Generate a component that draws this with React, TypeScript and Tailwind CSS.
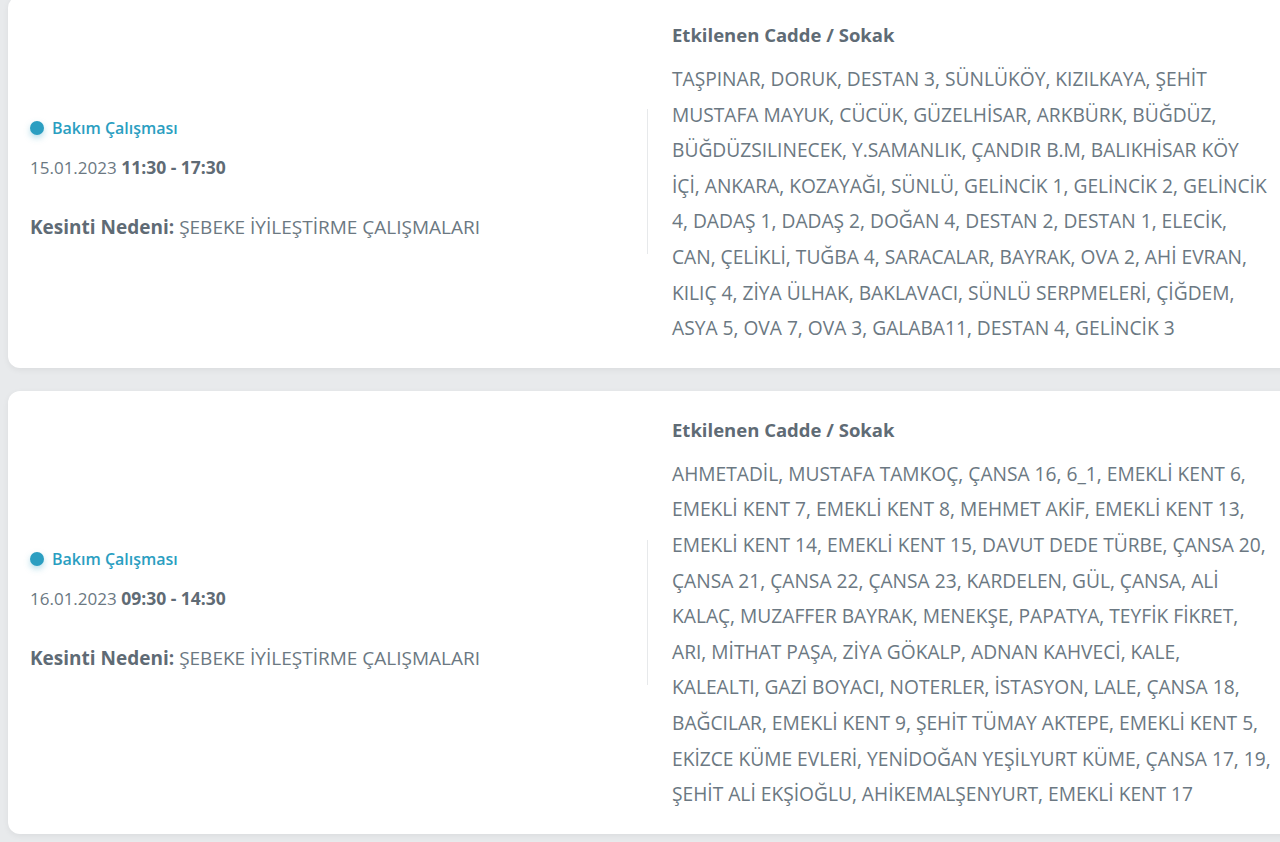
import React from 'react';

type Outage = {
    date: string;
    time: string;
    reason: string;
    streets: string;
    narrow?: boolean;
};

const outages: Outage[] = [
    {
        date: '15.01.2023',
        time: '11:30 - 17:30',
        reason: 'ŞEBEKE İYİLEŞTİRME ÇALIŞMALARI',
        narrow: true,
        streets:
            'TAŞPINAR, DORUK, DESTAN 3, SÜNLÜKÖY, KIZILKAYA, ŞEHİT MUSTAFA MAYUK, CÜCÜK, GÜZELHİSAR, ARKBÜRK, BÜĞDÜZ, BÜĞDÜZSILINECEK, Y.SAMANLIK, ÇANDIR B.M, BALIKHİSAR KÖY İÇİ, ANKARA, KOZAYAĞI, SÜNLÜ, GELİNCİK 1, GELİNCİK 2, GELİNCİK 4, DADAŞ 1, DADAŞ 2, DOĞAN 4, DESTAN 2, DESTAN 1, ELECİK, CAN, ÇELİKLİ, TUĞBA 4, SARACALAR, BAYRAK, OVA 2, AHİ EVRAN, KILIÇ 4, ZİYA ÜLHAK, BAKLAVACI, SÜNLÜ SERPMELERİ, ÇİĞDEM, ASYA 5, OVA 7, OVA 3, GALABA11, DESTAN 4, GELİNCİK 3',
    },
    {
        date: '16.01.2023',
        time: '09:30 - 14:30',
        reason: 'ŞEBEKE İYİLEŞTİRME ÇALIŞMALARI',
        streets:
            'AHMETADİL, MUSTAFA TAMKOÇ, ÇANSA 16, 6_1, EMEKLİ KENT 6, EMEKLİ KENT 7, EMEKLİ KENT 8, MEHMET AKİF, EMEKLİ KENT 13, EMEKLİ KENT 14, EMEKLİ KENT 15, DAVUT DEDE TÜRBE, ÇANSA 20, ÇANSA 21, ÇANSA 22, ÇANSA 23, KARDELEN, GÜL, ÇANSA, ALİ KALAÇ, MUZAFFER BAYRAK, MENEKŞE, PAPATYA, TEYFİK FİKRET, ARI, MİTHAT PAŞA, ZİYA GÖKALP, ADNAN KAHVECİ, KALE, KALEALTI, GAZİ BOYACI, NOTERLER, İSTASYON, LALE, ÇANSA 18, BAĞCILAR, EMEKLİ KENT 9, ŞEHİT TÜMAY AKTEPE, EMEKLİ KENT 5, EKİZCE KÜME EVLERİ, YENİDOĞAN YEŞİLYURT KÜME, ÇANSA 17, 19, ŞEHİT ALİ EKŞİOĞLU, AHİKEMALŞENYURT, EMEKLİ KENT 17',
    },
];

const OutageCard: React.FC<{ item: Outage }> = ({ item }) => {
    return (
        <div className="flex w-[1300px] rounded-[12px] bg-white shadow-[0_2px_6px_rgba(0,0,0,0.06)]">
            {/* left: type, date and reason */}
            <div className="flex w-[640px] shrink-0 items-center">
                <div className="flex flex-1 flex-col pb-[6px] pl-[22px]">
                    <div className="flex h-[22px] items-center gap-[8px]">
                        <span className="h-[14px] w-[14px] rounded-full bg-[#2a9ec1] shadow-[0_3px_6px_rgba(42,158,193,0.35)]" />
                        <span className="text-[16px] font-semibold text-[#2a9ec1]">Bakım Çalışması</span>
                    </div>
                    <div className="mt-[15px] text-[17px] leading-[26px] text-[#6b7882]">
                        {item.date} <span className="text-[17.5px] font-bold text-[#5f6b75]">{item.time}</span>
                    </div>
                    <div className="mt-[33px] text-[19px] leading-[26px] text-[#6b7882]">
                        <span className="font-bold text-[#5f6b75]">Kesinti Nedeni:</span> {item.reason}
                    </div>
                </div>
                <div className="h-[145px] w-px bg-[#e7e9eb]" />
            </div>

            {/* right: affected streets */}
            <div className={item.narrow ? 'w-[620px] pb-[22px] pl-[24px] pt-[27px]' : 'w-[624px] pb-[22px] pl-[24px] pt-[27px]'}>
                <div className="text-[18.5px] font-bold leading-[24px] text-[#5f6b75]">Etkilenen Cadde / Sokak</div>
                <p className="mt-[14px] text-[19.2px] leading-[35.6px] text-[#6b7882]">{item.streets}</p>
            </div>
        </div>
    );
};

const App: React.FC = () => {
    return (
        <div
            className="h-[842px] w-screen overflow-hidden bg-[#e8eaec]"
            style={{ fontFamily: '"Open Sans", "Noto Sans", sans-serif' }}
        >
            <div className="-mt-[4px] flex flex-col gap-[23px] pl-[8px]">
                {outages.map((o) => (
                    <OutageCard key={o.date} item={o} />
                ))}
            </div>
        </div>
    );
};

export default App;
